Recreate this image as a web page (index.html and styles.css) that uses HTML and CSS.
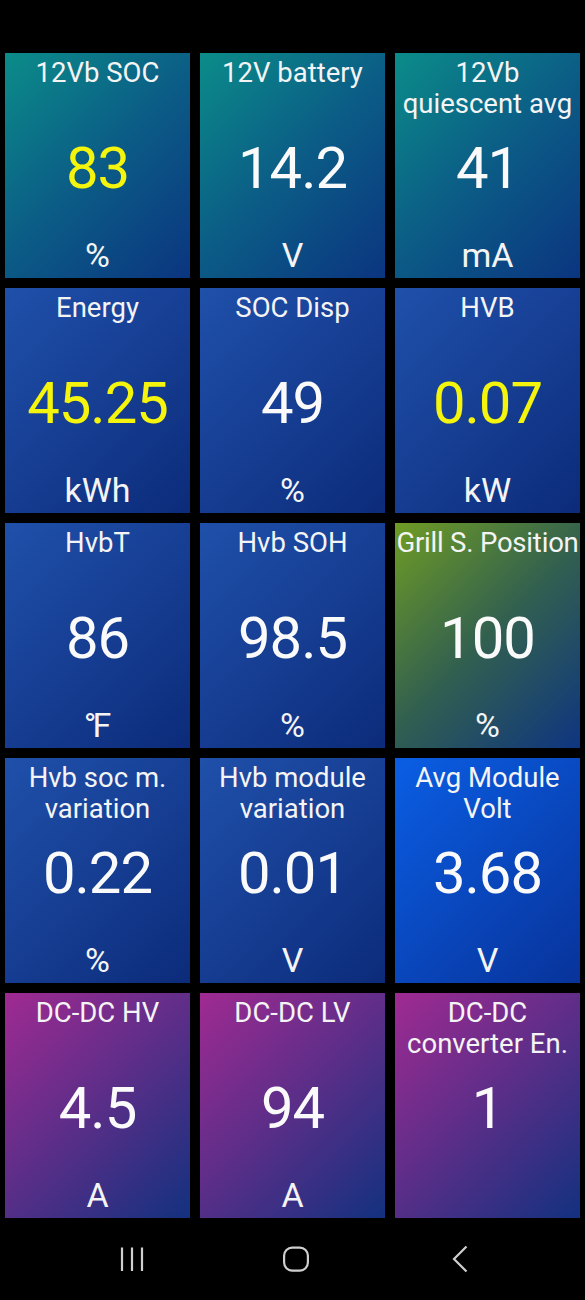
FILE: index.html
```html
<!DOCTYPE html>
<html lang="en">
<head>
  <meta charset="UTF-8">
  <title>Dashboard</title>
  <link rel="stylesheet" href="styles.css">
</head>
<body>
  <div class="grid">
    <div class="tile teal"><div class="ttl">12Vb SOC</div><div class="val hi">83</div><div class="unit">%</div></div>
    <div class="tile teal"><div class="ttl">12V battery</div><div class="val">14.2</div><div class="unit">V</div></div>
    <div class="tile teal"><div class="ttl">12Vb quiescent avg</div><div class="val">41</div><div class="unit">mA</div></div>

    <div class="tile blue"><div class="ttl">Energy</div><div class="val hi">45.25</div><div class="unit">kWh</div></div>
    <div class="tile blue"><div class="ttl">SOC Disp</div><div class="val">49</div><div class="unit">%</div></div>
    <div class="tile blue"><div class="ttl">HVB</div><div class="val hi">0.07</div><div class="unit">kW</div></div>

    <div class="tile blue"><div class="ttl">HvbT</div><div class="val">86</div><div class="unit deg">°F</div></div>
    <div class="tile blue"><div class="ttl">Hvb SOH</div><div class="val">98.5</div><div class="unit">%</div></div>
    <div class="tile olive"><div class="ttl nowrap">Grill S. Position</div><div class="val">100</div><div class="unit">%</div></div>

    <div class="tile blue"><div class="ttl">Hvb soc m. variation</div><div class="val">0.22</div><div class="unit">%</div></div>
    <div class="tile blue"><div class="ttl">Hvb module variation</div><div class="val">0.01</div><div class="unit">V</div></div>
    <div class="tile bright"><div class="ttl">Avg Module Volt</div><div class="val">3.68</div><div class="unit">V</div></div>

    <div class="tile purple"><div class="ttl">DC-DC HV</div><div class="val">4.5</div><div class="unit">A</div></div>
    <div class="tile purple"><div class="ttl">DC-DC LV</div><div class="val">94</div><div class="unit">A</div></div>
    <div class="tile purple"><div class="ttl">DC-DC converter En.</div><div class="val">1</div><div class="unit"></div></div>
  </div>

  <div class="nav">
    <svg width="30" height="30" viewBox="0 0 30 30"><path d="M5 3.5V27M15 3.5V27M25 3.5V27" stroke="#cfcfcf" stroke-width="2.2" fill="none"/></svg>
    <svg width="30" height="30" viewBox="0 0 30 30"><rect x="3.1" y="3.6" width="23.8" height="23" rx="8" stroke="#cfcfcf" stroke-width="2.2" fill="none"/></svg>
    <svg width="30" height="30" viewBox="0 0 30 30"><path d="M21.5 2.5L9 15L21.5 27.5" stroke="#cfcfcf" stroke-width="2.2" fill="none"/></svg>
  </div>
</body>
</html>
```

FILE: styles.css
```css
html, body {
  margin: 0;
  background: #000;
  font-family: Roboto, 'Noto Sans', sans-serif;
}

.grid {
  display: grid;
  grid-template-columns: repeat(3, 185px);
  grid-auto-rows: 225px;
  gap: 10px;
  padding: 53px 5px 0;
}

.tile {
  display: grid;
  grid-template-areas: "stack";
  padding: 4px 0 5px;
  color: #f4f4f4;
  text-align: center;
  overflow: hidden;
}

.tile > div { grid-area: stack; }

.ttl {
  align-self: start;
  font-size: 27.5px;
  line-height: 31px;
}

.ttl.nowrap { white-space: nowrap; letter-spacing: -0.2px; }

.val {
  align-self: center;
  margin-top: 6px;
  font-size: 58px;
  letter-spacing: -1px;
  color: #fafafa;
}

.val.hi { color: #f4f40c; }

.unit {
  align-self: end;
  font-size: 34px;
  line-height: 36px;
}

.deg { letter-spacing: -4px; margin-left: -4px; }

.teal   { background: linear-gradient(135deg, #0b8c89 0%, #0b5c86 50%, #0b3580 100%); }
.blue   { background: linear-gradient(135deg, #1f50aa 0%, #163e93 50%, #0c2b7a 100%); }
.olive  { background: linear-gradient(135deg, #6f9c24 0%, #32604f 50%, #0f3580 100%); }
.bright { background: linear-gradient(135deg, #0a5ee4 0%, #0948bf 50%, #08339a 100%); }
.purple { background: linear-gradient(135deg, #a02a92 0%, #5a2e88 50%, #13317f 100%); }

.nav {
  display: flex;
  justify-content: center;
  align-items: center;
  gap: 134px;
  height: 82px;
  padding-left: 6px;
}
```
